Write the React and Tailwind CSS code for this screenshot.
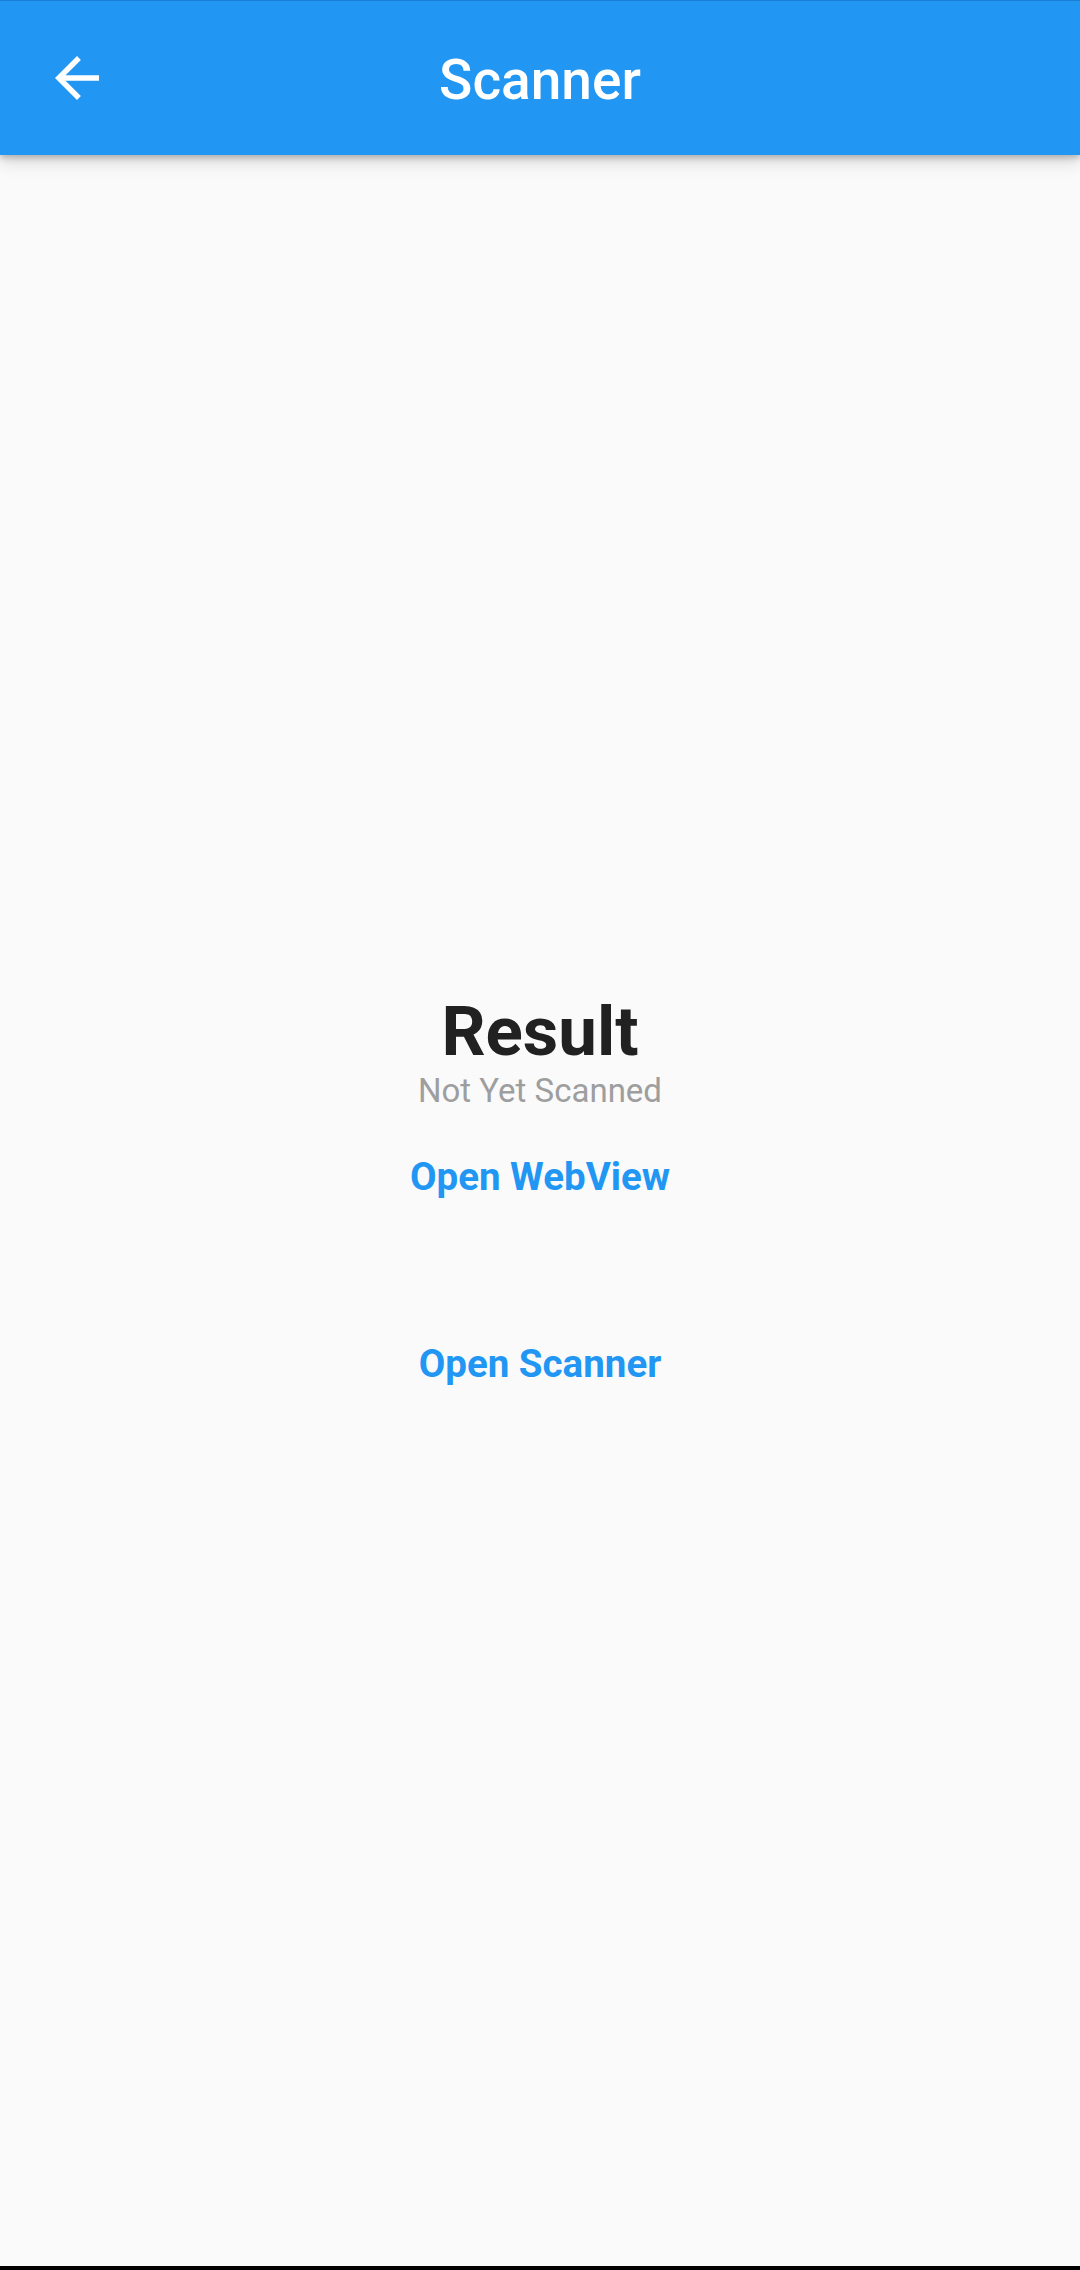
import React from "react";

function BackArrow() {
  return (
    <svg viewBox="0 0 24 24" className="w-[66px] h-[66px]" fill="#ffffff">
      <path d="M20 11H7.83l5.59-5.59L12 4l-8 8 8 8 1.41-1.41L7.83 13H20v-2z" />
    </svg>
  );
}

export default function App() {
  return (
    <div
      className="h-[2270px] w-[1080px] flex flex-col bg-[#fafafa]"
      style={{ fontFamily: "Roboto, 'Noto Sans', sans-serif" }}
    >
      <header className="relative z-10 h-[155px] shrink-0 border-t border-[#1a7fd4] bg-[#2196f3] grid grid-cols-[1fr_auto_1fr] items-center shadow-[0_3px_6px_rgba(0,0,0,0.22),0_8px_16px_rgba(0,0,0,0.12)]">
        <div className="flex items-center pl-[44px]">
          <BackArrow />
        </div>
        <h1 className="mt-[4px] text-[55px] leading-[55px] font-medium text-white">Scanner</h1>
        <div />
      </header>
      <main className="flex-1 flex flex-col items-center justify-center pb-[11px]">
        <div className="text-[69px] leading-[69px] font-bold text-[#212121]">Result</div>
        <div className="mt-[8px] text-[33px] leading-[33px] text-[#9e9e9e]">Not Yet Scanned</div>
        <button className="mt-[21px] h-[98px] px-[22px] flex items-center justify-center text-[38.5px] leading-[38px] font-bold text-[#2196f3]">
          Open WebView
        </button>
        <button className="mt-[89px] h-[98px] px-[22px] flex items-center justify-center text-[38.5px] leading-[38px] font-bold text-[#2196f3]">
          Open Scanner
        </button>
      </main>
      <div className="h-[4px] shrink-0 bg-black" />
    </div>
  );
}
